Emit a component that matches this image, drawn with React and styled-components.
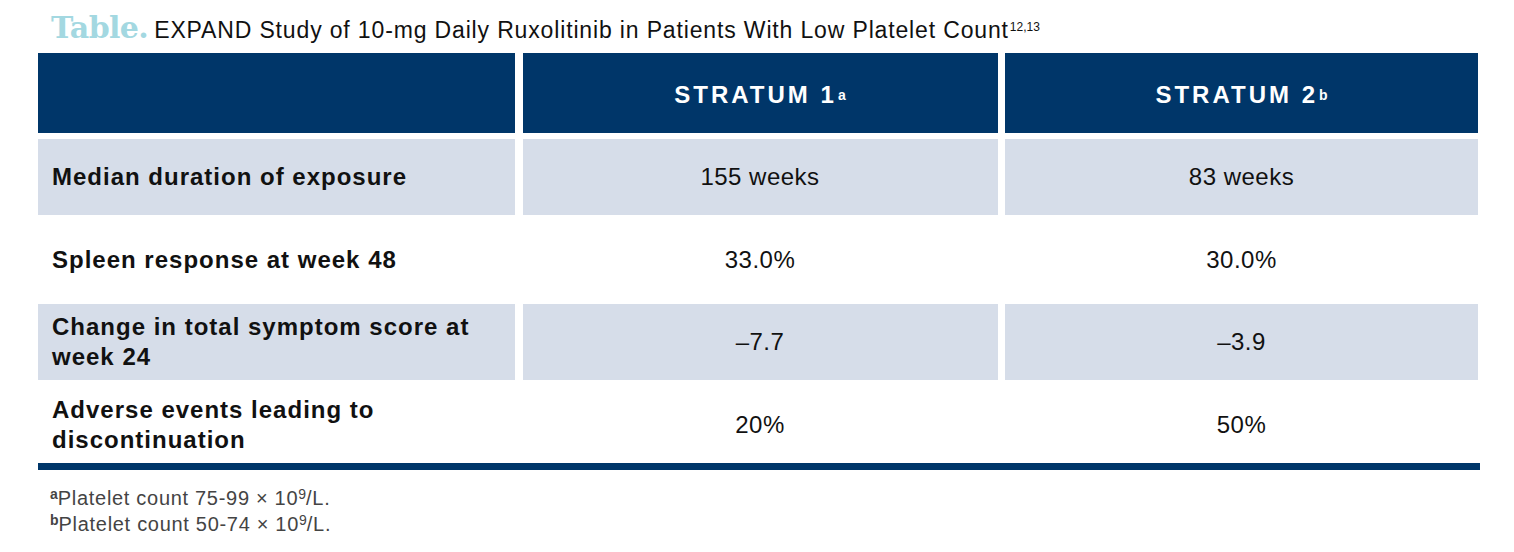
import React from "react";
import styled, { createGlobalStyle } from "styled-components";

const Global = createGlobalStyle`
  html, body { margin: 0; padding: 0; background: #ffffff; }
  body { font-family: "Liberation Sans", Arial, sans-serif; color: #111; }
`;

const NAVY = "#003669";
const SHADE = "#d6dde9";

const Page = styled.div`
  width: 1514px;
  height: 552px;
  padding: 10px 36px 0 38px;
  box-sizing: border-box;
  overflow: hidden;
`;

const Caption = styled.div`
  display: flex;
  align-items: baseline;
  padding-left: 13px;
  height: 43px;
`;

const CaptionTag = styled.span`
  font-family: "DejaVu Serif", "Liberation Serif", serif;
  font-size: 30px;
  font-weight: 600;
  color: #a3d8e1;
  margin-right: 6px;
  letter-spacing: -0.6px;
`;

const CaptionText = styled.span`
  font-size: 23px;
  color: #111;
  letter-spacing: 0.85px;
`;

const Sup = styled.sup`
  font-size: ${(p) => p.$size || 12}px;
  vertical-align: ${(p) => p.$lift || "0.6em"};
  line-height: 0;
  letter-spacing: 0;
  margin-left: 1px;
`;

const Grid = styled.div`
  display: grid;
  grid-template-columns: 477px 475px 473px;
  column-gap: 7.5px;
  grid-template-rows: 79.5px repeat(4, 76px);
  row-gap: 6.5px;
`;

const HeadCell = styled.div`
  background: ${NAVY};
  color: #fff;
  display: flex;
  align-items: center;
  justify-content: center;
  font-size: 24px;
  font-weight: 700;
  letter-spacing: 3px;
  padding-top: 5px;
`;

const LabelCell = styled.div`
  background: ${(p) => (p.$shade ? SHADE : "transparent")};
  display: flex;
  align-items: center;
  padding: 0 14px;
  font-size: 24px;
  font-weight: 700;
  letter-spacing: 1px;
  line-height: 30px;
  color: #111;
`;

const LabelText = styled.span`
  max-width: ${(p) => p.$max}px;
`;

const ValueCell = styled.div`
  background: ${(p) => (p.$shade ? SHADE : "transparent")};
  display: flex;
  align-items: center;
  justify-content: center;
  font-size: 24px;
  letter-spacing: 0.5px;
  color: #111;
`;

const Rule = styled.div`
  height: 7px;
  background: ${NAVY};
  width: 1442px;
`;

const Notes = styled.div`
  padding: 15px 0 0 12px;
  font-size: 20px;
  line-height: 26px;
  color: #444;
  letter-spacing: 0.7px;
`;

const Note = styled.div`
  display: flex;
  align-items: baseline;
`;

const NoteMark = styled.span`
  font-size: 14px;
  font-weight: ${(p) => (p.$bold ? 700 : 400)};
  line-height: 0;
  align-self: flex-start;
  padding-top: 9px;
  letter-spacing: 0;
`;

const rows = [
  ["Median duration of exposure", "155 weeks", "83 weeks", 440],
  ["Spleen response at week 48", "33.0%", "30.0%", 440],
  ["Change in total symptom score at week 24", "\u20137.7", "\u20133.9", 440],
  ["Adverse events leading to discontinuation", "20%", "50%", 340],
];

function Footnote({ mark, range }) {
  return (
    <Note>
      <NoteMark $bold>{mark}</NoteMark>
      Platelet count {range} × 10
      <NoteMark>9</NoteMark>
      /L.
    </Note>
  );
}

export default function App() {
  return (
    <Page>
      <Global />
      <Caption>
        <CaptionTag>Table.</CaptionTag>
        <CaptionText>
          EXPAND Study of 10-mg Daily Ruxolitinib in Patients With Low Platelet Count
          <Sup $size={12}>12,13</Sup>
        </CaptionText>
      </Caption>
      <Grid>
        <HeadCell />
        <HeadCell>
          STRATUM 1<Sup $size={14} $lift="0.6em">a</Sup>
        </HeadCell>
        <HeadCell>
          STRATUM 2<Sup $size={14} $lift="0.6em">b</Sup>
        </HeadCell>
        {rows.map((r, i) => (
          <React.Fragment key={i}>
            <LabelCell $shade={i % 2 === 0}>
              <LabelText $max={r[3]}>{r[0]}</LabelText>
            </LabelCell>
            <ValueCell $shade={i % 2 === 0}>{r[1]}</ValueCell>
            <ValueCell $shade={i % 2 === 0}>{r[2]}</ValueCell>
          </React.Fragment>
        ))}
      </Grid>
      <Rule />
      <Notes>
        <Footnote mark="a" range="75-99" />
        <Footnote mark="b" range="50-74" />
      </Notes>
    </Page>
  );
}
